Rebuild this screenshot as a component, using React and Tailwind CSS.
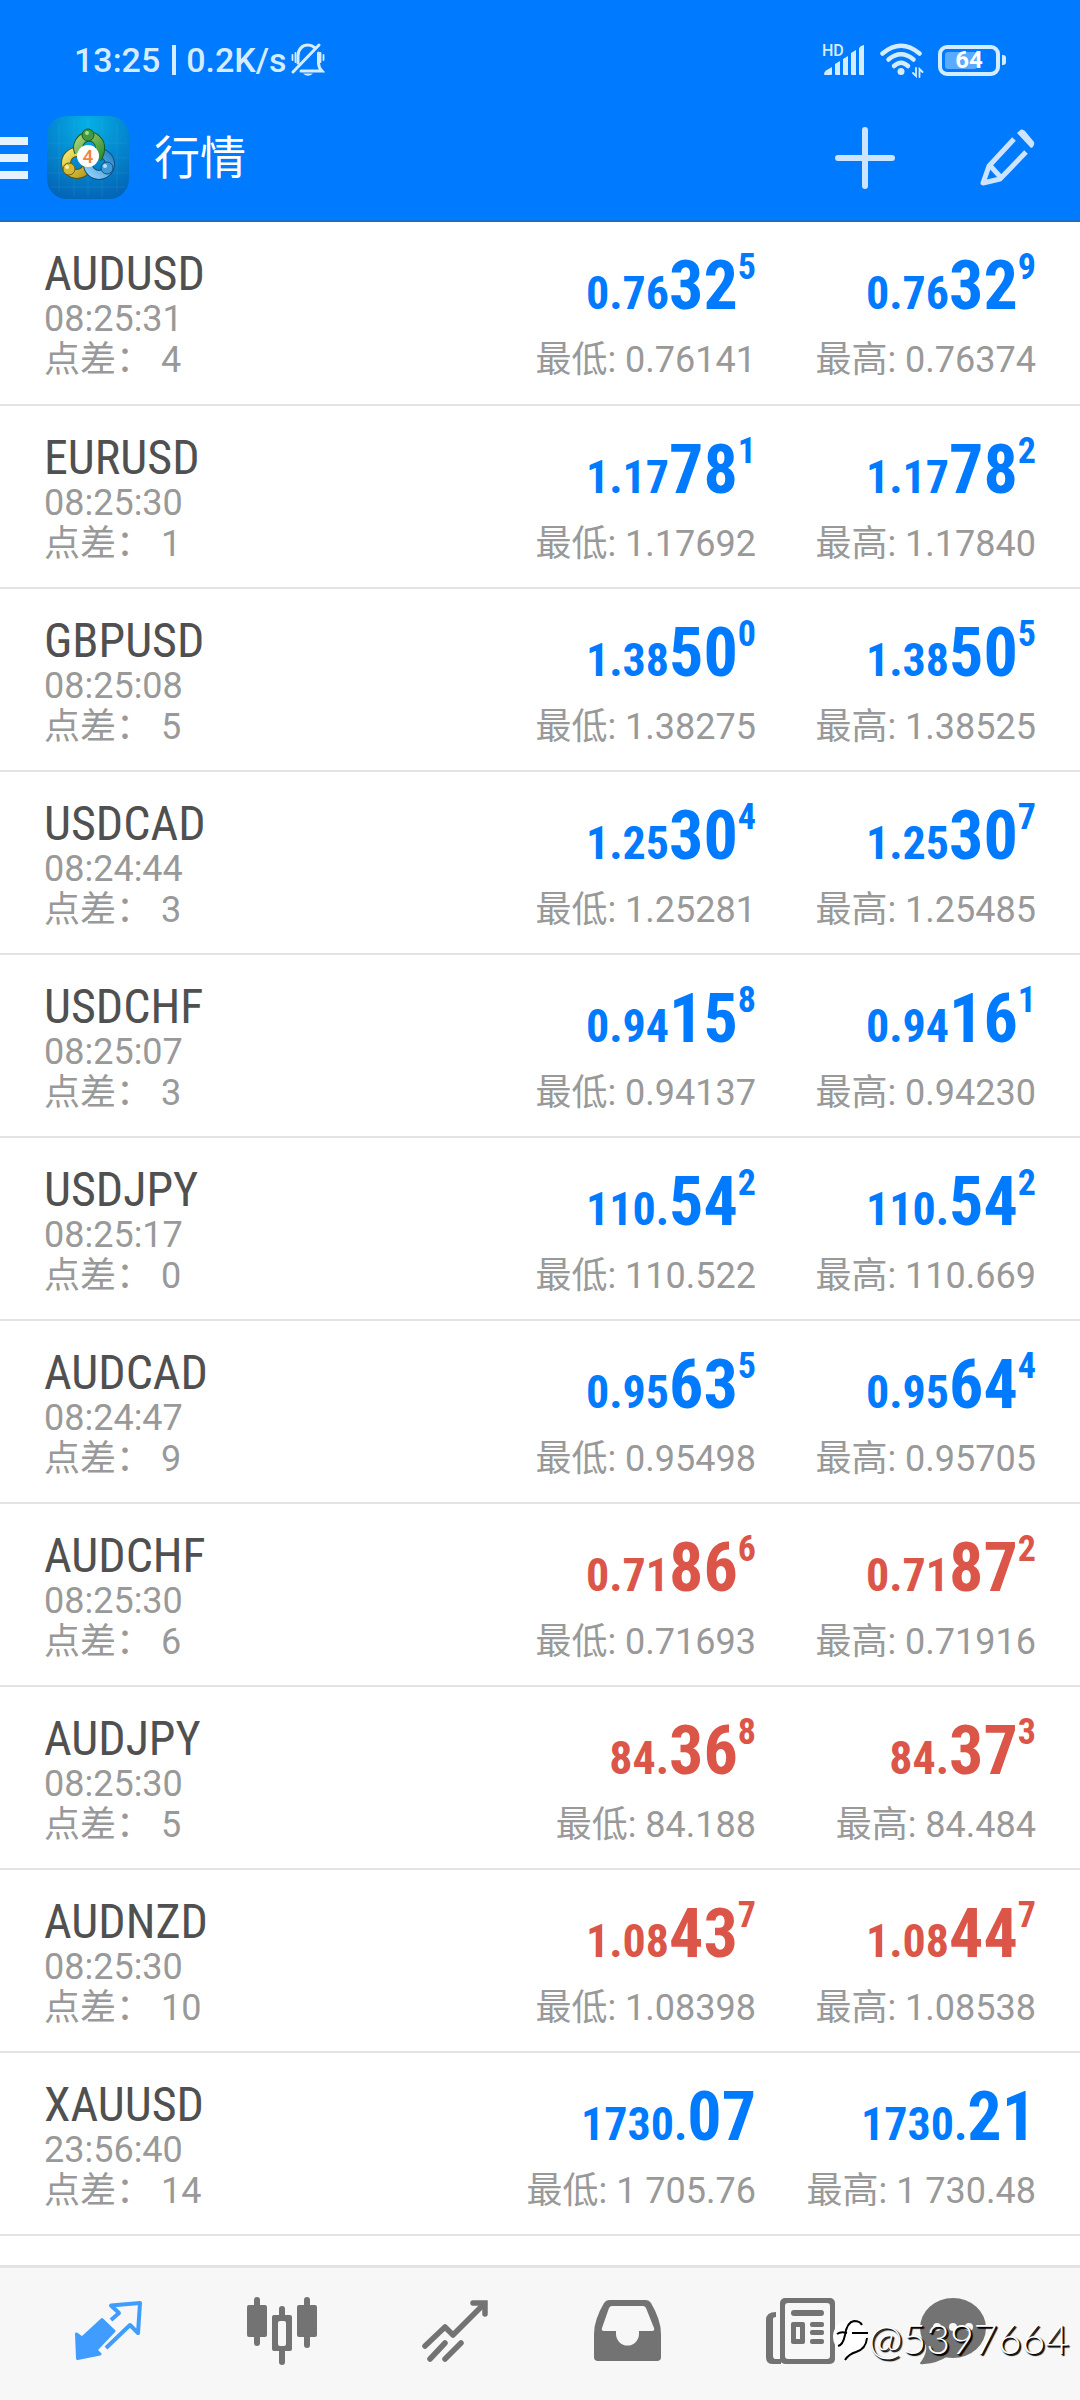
import React, { useState } from 'react';

const quotes = [
  { symbol: 'AUDUSD', time: '08:25:31', spread: 4, bid: ['0.76', '32', '5'], ask: ['0.76', '32', '9'], low: '0.76141', high: '0.76374' },
  { symbol: 'EURUSD', time: '08:25:30', spread: 1, bid: ['1.17', '78', '1'], ask: ['1.17', '78', '2'], low: '1.17692', high: '1.17840' },
  { symbol: 'GBPUSD', time: '08:25:08', spread: 5, bid: ['1.38', '50', '0'], ask: ['1.38', '50', '5'], low: '1.38275', high: '1.38525' },
  { symbol: 'USDCAD', time: '08:24:44', spread: 3, bid: ['1.25', '30', '4'], ask: ['1.25', '30', '7'], low: '1.25281', high: '1.25485' },
  { symbol: 'USDCHF', time: '08:25:07', spread: 3, bid: ['0.94', '15', '8'], ask: ['0.94', '16', '1'], low: '0.94137', high: '0.94230' },
  { symbol: 'USDJPY', time: '08:25:17', spread: 0, bid: ['110.', '54', '2'], ask: ['110.', '54', '2'], low: '110.522', high: '110.669' },
  { symbol: 'AUDCAD', time: '08:24:47', spread: 9, bid: ['0.95', '63', '5'], ask: ['0.95', '64', '4'], low: '0.95498', high: '0.95705' },
  { symbol: 'AUDCHF', time: '08:25:30', spread: 6, bid: ['0.71', '86', '6'], ask: ['0.71', '87', '2'], low: '0.71693', high: '0.71916', down: true },
  { symbol: 'AUDJPY', time: '08:25:30', spread: 5, bid: ['84.', '36', '8'], ask: ['84.', '37', '3'], low: '84.188', high: '84.484', down: true },
  { symbol: 'AUDNZD', time: '08:25:30', spread: 10, bid: ['1.08', '43', '7'], ask: ['1.08', '44', '7'], low: '1.08398', high: '1.08538', down: true },
  { symbol: 'XAUUSD', time: '23:56:40', spread: 14, bid: ['1730.', '07', ''], ask: ['1730.', '21', ''], low: '1 705.76', high: '1 730.48' },
];

const BellOffIcon = () => (
  <svg width="34" height="34" viewBox="0 0 34 34" fill="none" stroke="currentColor" strokeWidth="3" strokeLinecap="round">
    <path d="M7 20V13C7 6 11.500 2 17 2C19.500 2 21.500 2.800 23.500 4.500" />
    <path d="M27.500 10V20C27.500 24 29 26 31 28H10" />
    <path d="M28 2L2 29" />
    <path d="M1.500 12v5M4.500 10v9M32.500 12v5M29.500 10v9" strokeWidth="1.800" />
    <path d="M12 30.500H22Q17 35 12 30.500Z" fill="currentColor" stroke="none" />
  </svg>
);

const SignalIcon = () => (
  <svg className="overflow-visible" width="42" height="34" viewBox="0 0 42 34" fill="currentColor">
    <text x="-2" y="13" fontSize="16" fontWeight="500">HD</text>
    <path d="M0 31Q0 29 2 27.500L8 24V31Q8 32 7 32H1Q0 32 0 31Z" />
    <path d="M11 21L16 18V32H12Q11 32 11 31Z" />
    <path d="M19 16L24 13V32H20Q19 32 19 31Z" />
    <path d="M27 10L32 7V32H28Q27 32 27 31Z" />
    <path d="M35 6Q35 4.500 37 3L40 2V32H36Q35 32 35 31Z" />
  </svg>
);

const WifiIcon = () => (
  <svg width="44" height="36" viewBox="0 0 44 36" fill="none" stroke="currentColor" strokeWidth="4.500" strokeLinecap="round">
    <path d="M2.500 11.500Q21 -4 39.500 11.500" />
    <path d="M8.500 17.500Q21 7 33.500 17.500" />
    <path d="M14 24Q21 17.500 28 24" />
    <circle cx="21" cy="29.500" r="3.500" fill="currentColor" stroke="none" />
    <path d="M36 26V34L33 31M39.500 35V27L42.500 30" strokeWidth="1.800" />
  </svg>
);

const AppLogo = () => (
  <svg className="ml-[19px]" width="82" height="83" viewBox="0 0 82 83">
    <defs>
      <radialGradient id="logoBg" cx="0.5" cy="0.1" r="0.95">
        <stop offset="0" stopColor="#06b0e6" />
        <stop offset="0.500" stopColor="#0488cf" />
        <stop offset="1" stopColor="#0363b4" />
      </radialGradient>
      <linearGradient id="logoGreen" x1="0" y1="0" x2="1" y2="1">
        <stop offset="0" stopColor="#a6d272" />
        <stop offset="1" stopColor="#2f8f35" />
      </linearGradient>
      <linearGradient id="logoYellow" x1="0" y1="0" x2="1" y2="1">
        <stop offset="0" stopColor="#f3e56c" />
        <stop offset="1" stopColor="#b99a1c" />
      </linearGradient>
      <linearGradient id="logoBlue" x1="0" y1="1" x2="1" y2="0">
        <stop offset="0" stopColor="#8fd0f5" />
        <stop offset="1" stopColor="#2b86c8" />
      </linearGradient>
    </defs>
    <rect width="82" height="83" rx="20" fill="url(#logoBg)" />
    <path d="M27 2V81M41 2V81M55 2V81M70 8V75M12 8V75M2 27H80M2 42H80M2 57H80M4 71H78" stroke="#5cc4ee" strokeOpacity="0.150" />
    <g fill="none">
      <circle cx="30" cy="47" r="11" stroke="#4f5a1c" strokeWidth="10" />
      <circle cx="30" cy="47" r="11" stroke="url(#logoYellow)" strokeWidth="8" />
      <circle cx="52" cy="48" r="11" stroke="#0d4f86" strokeWidth="10" />
      <circle cx="52" cy="48" r="11" stroke="url(#logoBlue)" strokeWidth="8" />
      <path d="M32 36A11 11 0 1 1 53 33Q53 38 50 42" stroke="#1d5a24" strokeWidth="10" />
      <path d="M32 36A11 11 0 1 1 53 33Q53 38 50 42" stroke="url(#logoGreen)" strokeWidth="8" />
    </g>
    <circle cx="41" cy="19" r="6" fill="#3f9b3f" stroke="#1d5a24" />
    <circle cx="40" cy="17" r="2" fill="#a8dc8c" />
    <circle cx="22" cy="53" r="6" fill="#d3b935" stroke="#6b5d12" />
    <circle cx="20" cy="51" r="2" fill="#f7efa2" />
    <circle cx="60" cy="52" r="6" fill="#419ad6" stroke="#0d4f86" />
    <circle cx="58" cy="50" r="2" fill="#b5e2fa" />
    <circle cx="41" cy="40" r="11" fill="#fff" />
    <text x="41" y="47" textAnchor="middle" fontSize="19" fontWeight="500" fill="#ee8440">4</text>
  </svg>
);

const PencilIcon = () => (
  <svg width="56" height="58" viewBox="0 0 56 58" fill="none" stroke="currentColor" strokeWidth="5">
    <path d="M34 10L9 37L3 54L20 50L46 23" strokeLinejoin="round" />
    <path d="M9.500 36L20.500 48" />
    <path d="M37 4L41 0.500Q43 0 45 2L54 13Q55 15 53 18L51 19Z" fill="currentColor" stroke="none" />
  </svg>
);

const QuotesIcon = () => (
  <svg width="68" height="62" viewBox="0 0 68 62" fill="none" stroke="#409cff" strokeLinejoin="round">
    <path d="M1.500 34L7 38L27 19.500L39 31L21 50L25 54L2.500 58.500Z" fill="#409cff" strokeWidth="3" />
    <path d="M36 20L44 13L36 5.500L65 3L63 33L55 25L31 48" strokeWidth="4" />
  </svg>
);

const ChartIcon = () => (
  <svg width="70" height="68" viewBox="0 0 70 68" fill="#737373">
    <rect x="7" width="6" height="49" rx="3" />
    <rect y="8" width="20" height="32" rx="2" />
    <rect x="32" y="9" width="6" height="59" rx="3" />
    <rect x="25" y="18" width="20" height="36" rx="2" />
    <rect x="31" y="24" width="8" height="25" rx="2" fill="#f7f7f7" />
    <rect x="57" width="6" height="51" rx="3" />
    <rect x="50" y="8" width="20" height="32" rx="2" />
  </svg>
);

const TradeIcon = () => (
  <svg width="66" height="62" viewBox="0 0 66 62" fill="none" stroke="#737373" strokeWidth="5.500" strokeLinecap="round">
    <path d="M3 46L23 27L31 35L62 4" strokeLinejoin="round" />
    <path d="M51 3H63V14" />
    <path d="M8 59L23 43M23 59L39 43" />
  </svg>
);

const HistoryIcon = () => (
  <svg width="67" height="62" viewBox="0 0 67 62">
    <path d="M15 0H52Q55 0 57 3Q67 20 67 34V57Q67 61 63 61H4Q0 61 0 57V34Q0 20 10 3Q12 0 15 0Z" fill="#737373" />
    <path d="M18 6H49Q51 6 52 8L60 28Q61 31 58 31H45V34A11 11 0 0 1 22 34V31H10Q7 31 8 28L15 8Q16 6 18 6Z" fill="#f7f7f7" />
  </svg>
);

const NewsIcon = () => (
  <svg width="70" height="67" viewBox="0 0 70 67">
    <path d="M10 14V19Q7 19 7 21V58Q7 61 10 61H15V66H6Q0 66 0 59V22Q0 14 10 14Z" fill="#737373" />
    <rect x="14" width="55" height="66" rx="5" fill="#737373" />
    <rect x="19" y="5" width="45" height="56" rx="3" fill="#f7f7f7" />
    <rect x="8" y="20" width="6" height="41" rx="2" fill="#f7f7f7" />
    <g fill="#737373">
      <rect x="25" y="12" width="33" height="6" rx="3" />
      <rect x="25" y="24" width="14" height="22" rx="2" />
      <rect x="44" y="24" width="14" height="5" rx="2" />
      <rect x="44" y="32" width="14" height="5" rx="2" />
      <rect x="44" y="41" width="14" height="5" rx="2" />
    </g>
    <rect x="30" y="29" width="4" height="12" fill="#f7f7f7" />
  </svg>
);

const ChatIcon = () => (
  <svg width="66" height="67" viewBox="0 0 66 67">
    <ellipse cx="33" cy="30" rx="33" ry="30" fill="#737373" />
    <path d="M4 42Q10 52 0 65Q0 67 4 66Q18 65 28 58Z" fill="#737373" />
    <g fill="#f7f7f7">
      <circle cx="17" cy="29" r="4" />
      <circle cx="33" cy="29" r="4" />
      <circle cx="49" cy="29" r="4" />
    </g>
  </svg>
);

const tabs = [
  { id: 'quotes', label: '行情', Icon: QuotesIcon },
  { id: 'chart', label: '图表', Icon: ChartIcon },
  { id: 'trade', label: '交易', Icon: TradeIcon },
  { id: 'history', label: '历史', Icon: HistoryIcon },
  { id: 'news', label: '新闻', Icon: NewsIcon },
  { id: 'chat', label: '聊天', Icon: ChatIcon },
];

const StatusBar = () => (
  <div className="flex h-[116px] items-center pl-[74px] pr-[74px] pt-1 text-[34px] font-medium text-[#d4ecff]">
    <span>13:25</span>
    <span className="ml-3 mr-[10px] h-[30px] w-[4px] bg-[#d4ecff]" />
    <span className="mr-1">0.2K/s</span>
    <BellOffIcon />
    <div className="ml-auto flex items-center">
      <SignalIcon />
      <div className="ml-[14px] mr-[14px]">
        <WifiIcon />
      </div>
      <div className="relative flex h-[31px] w-[62px] items-center justify-center rounded-[9px] border-4 border-[#d4ecff]">
        <span className="absolute inset-y-[3px] left-[3px] w-[32px] rounded-[3px] bg-[#5aaaff]" />
        <span className="relative text-[24px] font-bold leading-none text-white">64</span>
      </div>
      <span className="ml-[2px] h-[10px] w-[4px] rounded-r-[3px] bg-[#d4ecff]" />
    </div>
  </div>
);

const Toolbar = () => (
  <div className="flex h-[83px] items-center pr-11">
    <button aria-label="菜单" className="flex w-7 flex-col gap-[9px]">
      <span className="h-[8px] w-full bg-[#e6f3ff]" />
      <span className="h-[8px] w-full bg-[#e6f3ff]" />
      <span className="h-[8px] w-full bg-[#e6f3ff]" />
    </button>
    <AppLogo />
    <h1 className="ml-[25px] text-[46px] leading-none text-white">行情</h1>
    <div className="ml-auto flex items-center gap-[85px] text-[#cce4ff]">
      <button aria-label="添加">
        <svg width="60" height="62" viewBox="0 0 60 62" stroke="currentColor" strokeWidth="6" strokeLinecap="round">
          <path d="M30 3V59M3 31H57" />
        </svg>
      </button>
      <button aria-label="编辑">
        <PencilIcon />
      </button>
    </div>
  </div>
);

const Price = ({ parts, label, extreme, down }) => (
  <>
    <div
      className={`mb-[18px] h-[72px] whitespace-nowrap text-[68px] font-bold leading-[72px] font-['Roboto_Condensed',Roboto,sans-serif] ${
        down ? 'text-[#db5649]' : 'text-[#007aff]'
      }`}
    >
      <span className="text-[46px] leading-[0]">{parts[0]}</span>
      {parts[1]}
      {parts[2] && <span className="align-[30px] text-[36px] leading-[0]">{parts[2]}</span>}
    </div>
    <div className="whitespace-nowrap text-[36px] leading-[41px] text-[#999]">{label}: {extreme}</div>
  </>
);

const QuoteRow = ({ quote }) => (
  <tr className="h-[183px] border-b-2 border-[#e3e3e3]">
    <td className="pl-11 pt-[27px] align-top">
      <div className="text-[48px] leading-[50px] text-[#505050] font-['Roboto_Condensed',Roboto,sans-serif]">{quote.symbol}</div>
      <div className="text-[36px] leading-[41px] text-[#999]">{quote.time}</div>
      <div className="text-[36px] leading-[41px] text-[#999]">点差： {quote.spread}</div>
    </td>
    <td className="w-[280px] pt-7 text-right align-top">
      <Price parts={quote.bid} label="最低" extreme={quote.low} down={quote.down} />
    </td>
    <td className="w-[324px] pr-11 pt-7 text-right align-top">
      <Price parts={quote.ask} label="最高" extreme={quote.high} down={quote.down} />
    </td>
  </tr>
);

const Watermark = () => (
  <div className="pointer-events-none absolute right-[11px] top-[47px] flex items-center">
    <svg width="37" height="44" viewBox="0 0 37 44">
      <path d="M18 3A17 17 0 0 1 35 20Q35 34 19 35L13 41L14 35Q1 32 1 19A17 17 0 0 1 18 3Z" fill="#fff" />
      <path
        d="M5 17Q9 14 15 16M20 16H36M6 29Q11 28 13 18Q15 5 22 4Q28 4 30 8M35 21Q34 32 24 35Q17 37 13 43"
        fill="none"
        stroke="#000"
        strokeWidth="2"
      />
    </svg>
    <span className="font-['Lato'] text-[41px] font-light leading-[48px] text-white [text-shadow:1px_1px_1px_#000,2px_2px_1px_#000]">@5397664</span>
  </div>
);

export default function App() {
  const [active, setActive] = useState('quotes');

  return (
    <div className="flex min-h-screen flex-col bg-white font-['Roboto','Noto_Sans_CJK_SC',sans-serif]">
      <header className="border-b-2 border-[#1a6fc4] bg-[#007aff] pb-[21px]">
        <StatusBar />
        <Toolbar />
      </header>

      <main className="flex-1">
        <table className="w-full">
          <tbody>
            {quotes.map((quote) => (
              <QuoteRow key={quote.symbol} quote={quote} />
            ))}
          </tbody>
        </table>
      </main>

      <nav className="relative grid h-[135px] grid-cols-[repeat(5,173fr)_132fr] border-t-[3px] border-[#e3e3e3] bg-[#f7f7f7] pb-[6px] pl-[22px] pr-[61px]">
        {tabs.map(({ id, label, Icon }) => (
          <button
            key={id}
            aria-label={label}
            aria-current={active === id ? 'page' : undefined}
            onClick={() => setActive(id)}
            className="flex items-center justify-center"
          >
            <Icon />
          </button>
        ))}
        <Watermark />
      </nav>
    </div>
  );
}
